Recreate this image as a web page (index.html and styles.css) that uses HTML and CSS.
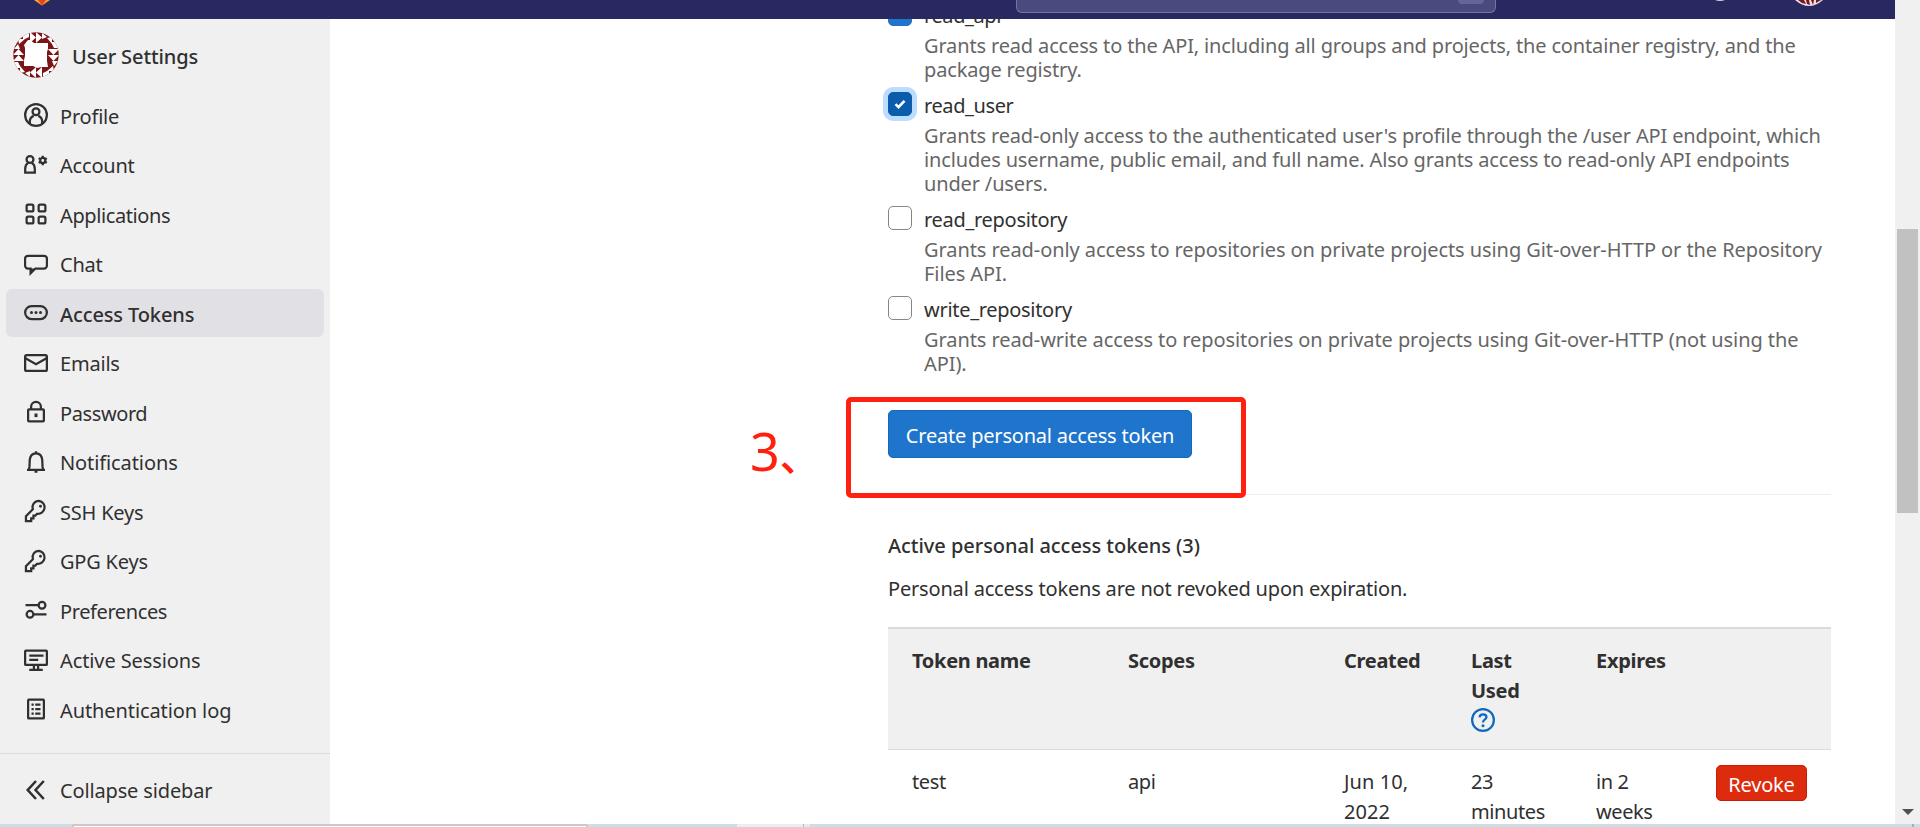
FILE: index.html
```html
<!DOCTYPE html>
<html lang="en">
<head>
<meta charset="utf-8">
<title>Access Tokens</title>
<link rel="stylesheet" href="styles.css">
</head>
<body>
<svg class="defs" width="0" height="0">
  <symbol id="key" viewBox="0 0 16 16"><path d="M10 1.2a4.3 4.3 0 0 0-4.1 5.6L1.3 11.4v3.3h3.5v-1.8h1.5v-1.8h1.3l1-1.2A4.4 4.4 0 1 0 10 1.2z"/><circle cx="11" cy="4.8" r=".95" fill="currentColor" stroke="none"/></symbol>
</svg>
<div class="app">
  <header class="topbar">
    <svg class="logo" width="16" height="6" viewBox="0 0 16 6"><path d="M0 0h16L8 5.5z" fill="#fca326"/><path d="M4 0h8L8 5.5z" fill="#e24329"/></svg>
    <div class="search"><span class="kbd"></span></div>
    <svg class="bar-help" width="14" height="3" viewBox="0 0 14 3"><path d="M2 0Q7 2 12 0z" fill="#d5d5e6"/></svg>
    <svg class="bar-user" width="30" height="7" viewBox="0 0 30 7"><path d="M1 0q14 12 28 0z" fill="#e6dfe6"/><path d="M4 0h6l2 4-4-1zM12 0h3l1 5-3-1zM17 0h3l-1 5zM22 0h5l-5 3z" fill="#7b1518"/></svg>
  </header>
  <div class="body">
    <aside class="sidebar">
      <div class="context">
        <svg class="avatar" width="46" height="46" viewBox="0 0 46 46"><defs><clipPath id="round"><circle cx="23" cy="23" r="22.7"/></clipPath>
          <path id="teeth" fill="#fff" d="M17 0l6 5.500-6 5.500zM23 0l6 5.500-6 5.500zM16 0v5L10 8V2zM5 7h7L6 12zM29 1l5 4-5 2z"/></defs>
          <g clip-path="url(#round)"><rect width="46" height="46" fill="#7b1518"/>
          <use href="#teeth"/><use href="#teeth" transform="rotate(90 23 23)"/><use href="#teeth" transform="rotate(180 23 23)"/><use href="#teeth" transform="rotate(270 23 23)"/>
          <path d="M17 8l4 3h14v6l-1 3v9l1 6h-6l-5 1-4-2h-9v-6l1-4v-8l-1-3 4-5z" fill="#fff"/></g></svg>
        <span>User Settings</span>
      </div>
      <nav class="nav">
        <a class="item"><svg class="ico" viewBox="0 0 16 16"><circle cx="8" cy="8" r="7.25"/><circle cx="8" cy="5.8" r="2.3"/><path d="M3.9 13.6v-1.4A3.9 3.9 0 0 1 6.5 8.6M12.1 13.6v-1.4a3.9 3.9 0 0 0-2.6-3.6"/></svg><span>Profile</span></a>
        <a class="item"><svg class="ico" viewBox="0 0 16 16"><circle cx="4" cy="4.3" r="2.3"/><path d="M2.7 6.6C1.4 7.3.8 8.7.8 10.6V13h6.4v-2.4c0-1.9-.6-3.3-1.9-4"/><circle cx="12.5" cy="5" r="1.7"/><path d="M12.5 1.9v1.2M12.5 6.9v1.2M9.8 3.4l1.1.7M14.1 5.9l1.1.7M9.8 6.6l1.1-.7M14.1 4.1l1.1-.7"/></svg><span>Account</span></a>
        <a class="item tight"><svg class="ico" viewBox="0 0 16 16"><rect x="1.75" y="1.75" width="4.5" height="4.5" rx="1"/><rect x="9.75" y="1.75" width="4.5" height="4.5" rx="1"/><rect x="1.75" y="9.75" width="4.5" height="4.5" rx="1"/><rect x="9.75" y="9.75" width="4.5" height="4.5" rx="1"/></svg><span>Applications</span></a>
        <a class="item"><svg class="ico" viewBox="0 0 16 16"><path d="M2.7 2.5h10.600a2 2 0 0 1 2 2V9a2 2 0 0 1-2 2H7.600l-3.200 3.200V11H2.700a2 2 0 0 1-2-2V4.500a2 2 0 0 1 2-2z"/><path d="M4.200 11h3l-3 3z" fill="currentColor" stroke="none"/></svg><span>Chat</span></a>
        <a class="item active"><svg class="ico" viewBox="0 0 16 16"><rect x=".75" y="3.4" width="14.5" height="8.6" rx="4.3"/><g fill="currentColor" stroke="none"><circle cx="5" cy="7.700" r="1"/><circle cx="8" cy="7.700" r="1"/><circle cx="11" cy="7.700" r="1"/></g></svg><span>Access Tokens</span></a>
        <a class="item"><svg class="ico" viewBox="0 0 16 16"><rect x=".75" y="2.75" width="14.5" height="10.5" rx="1"/><path d="M1 4.8l7 4 7-4"/></svg><span>Emails</span></a>
        <a class="item tight"><svg class="ico" viewBox="0 0 16 16"><rect x="2.75" y="6.25" width="10.5" height="8" rx=".6"/><path d="M4.75 6V4.5a3.25 3.25 0 0 1 6.5 0V6"/><path d="M8 9v2.4" stroke-width="2"/></svg><span>Password</span></a>
        <a class="item loose"><svg class="ico" viewBox="0 0 16 16"><path d="M2 13.2h12M3.3 13c.6-1.6.4-3.6.5-6C4 4 5.6 2.2 8 2.2S12 4 12.2 7c.1 2.400-.1 4.400.5 6M8 .9v1.200M7 14.400h2"/></svg><span>Notifications</span></a>
        <a class="item"><svg class="ico"><use href="#key"/></svg><span>SSH Keys</span></a>
        <a class="item"><svg class="ico"><use href="#key"/></svg><span>GPG Keys</span></a>
        <a class="item tight"><svg class="ico" viewBox="0 0 16 16"><circle cx="12" cy="4.800" r="2.250"/><circle cx="4" cy="10.900" r="2.250"/><path d="M1 4.800h8.700M6.300 10.900H15"/></svg><span>Preferences</span></a>
        <a class="item loose"><svg class="ico" viewBox="0 0 16 16"><rect x=".75" y="1.750" width="14.500" height="9.500" rx=".5"/><path d="M3.500 5H13M3.500 7.900h6M6.600 11.500v2.300M9.400 11.500v2.300M3.500 14.500h9" /></svg><span>Active Sessions</span></a>
        <a class="item loose"><svg class="ico" viewBox="0 0 16 16"><rect x="2.750" y="1.750" width="10.500" height="12.500" rx=".5"/><path d="M5 5h1.500M7.500 5h3.500M5 8h1.500M7.500 8h3.500M5 11h1.500M7.500 11h3.500"/></svg><span>Authentication log</span></a>
      </nav>
      <a class="item collapse"><svg class="ico" viewBox="0 0 16 16"><path d="M8 2L2.500 8 8 14M13.200 2L7.700 8l5.500 6" stroke-width="1.700"/></svg><span>Collapse sidebar</span></a>
    </aside>
    <main class="main">
      <section class="scopes">
        <div class="scope first"><i class="box on"></i><div><div class="name">read_api</div><p>Grants read access to the API, including all groups and projects, the container registry, and the<br>package registry.</p></div></div>
        <div class="scope"><i class="box on focus"><svg width="12" height="12" viewBox="0 0 12 12"><path d="M1.500 6.200l3 3 6-6.400" fill="none" stroke="#fff" stroke-width="2.600"/></svg></i><div><div class="name">read_user</div><p>Grants read-only access to the authenticated user's profile through the /user API endpoint, which<br>includes username, public email, and full name. Also grants access to read-only API endpoints<br>under /users.</p></div></div>
        <div class="scope wide"><i class="box"></i><div><div class="name">read_repository</div><p>Grants read-only access to repositories on private projects using Git-over-HTTP or the Repository<br>Files API.</p></div></div>
        <div class="scope wide"><i class="box"></i><div><div class="name">write_repository</div><p>Grants read-write access to repositories on private projects using Git-over-HTTP (not using the<br>API).</p></div></div>
      </section>
      <button class="create"><span>Create personal access token</span></button>
      <hr>
      <h5>Active personal access tokens (3)</h5>
      <p class="note">Personal access tokens are not revoked upon expiration.</p>
      <div class="table">
        <div class="row head"><div>Token name</div><div>Scopes</div><div>Created</div><div>Last<br>Used<br><svg class="q" width="24" height="24" viewBox="0 0 16 16"><circle cx="8" cy="8" r="7.250"/><path d="M5.700 6.200C5.800 4.900 6.700 4.200 8 4.200s2.300.8 2.300 1.900C10.300 7.600 8 7.600 8 9.600"/><circle cx="8" cy="11.900" r="1" fill="currentColor" stroke="none"/></svg></div><div>Expires</div><div></div></div>
        <div class="row"><div>test</div><div>api</div><div class="date">Jun 10,<br>2022</div><div>23<br>minutes</div><div>in 2<br>weeks</div><div><button class="revoke">Revoke</button></div></div>
      </div>
    </main>
  </div>
  <div class="scrollbar"><div class="thumb"></div><div class="arrow"></div></div>
  <div class="mark-box"></div>
  <div class="mark-label">3<span>、</span></div>
  <div class="under"><span class="window"></span><span class="pale"></span><span class="pale2"></span><span class="tick"></span></div>
</div>
</body>
</html>
```
FILE: styles.css
```css
* { box-sizing: border-box; }
body { margin: 0; overflow: hidden; background: #fff; color: #303030; font: 20px/30px "Noto Sans", "Open Sans", sans-serif; letter-spacing: -0.4px; }
p, h5 { margin: 0; }
button { font: inherit; letter-spacing: -0.2px; color: #fff; padding: 0; display: block; }
.defs { position: absolute; }
.app { position: relative; width: 1920px; height: 827px; overflow: hidden; display: flex; flex-direction: column; }
.topbar { height: 19px; width: 1895px; background: #292961; display: flex; align-items: flex-start; flex: none; position: relative; z-index: 2; padding-left: 34px; }
.search { margin-left: 966px; width: 480px; height: 13px; background: #4a4a7d; border: 1px solid #7474a0; border-top: 0; border-radius: 0 0 6px 6px; display: flex; justify-content: flex-end; padding-right: 11px; }
.kbd { width: 26px; height: 4px; background: #65659a; border-radius: 0 0 4px 4px; }
.bar-help { margin-left: 217px; }
.bar-user { margin-left: 67px; }
.body { display: flex; height: 805px; width: 1895px; flex: none; }
.sidebar { width: 330px; background: #f0f0f0; height: 805px; flex: none; }
.context { height: 72px; padding: 13px 0 0 13px; display: flex; gap: 13px; font-weight: 500; }
.context span { padding-top: 10px; height: 36px; line-height: 30px; letter-spacing: -0.1px; }
.avatar { flex: none; }
.nav { display: flex; flex-direction: column; gap: 1.5px; padding: 0 6px; }
.item { height: 48px; display: flex; align-items: center; padding-left: 18px; border-radius: 6px; gap: 12px; letter-spacing: -0.2px; }
.item span { padding-top: 3px; }
.tight { letter-spacing: -0.4px; }
.loose { letter-spacing: -0.1px; }
.active { background: #e1e0e5; font-weight: 500; letter-spacing: -0.12px; }
.ico { width: 24px; height: 24px; fill: none; stroke: #303030; color: #303030; stroke-width: 1.5; flex: none; }
.collapse { margin-top: 20px; border-top: 1px solid #dbdbdb; border-radius: 0; height: 73px; padding-left: 24px; letter-spacing: -0.15px; }
.collapse span { padding-top: 1px; }
.main { margin-left: 558px; width: 943px; }
.scopes { margin-top: -18px; display: flex; flex-direction: column; gap: 9px; }
.scope { display: flex; gap: 12px; }
.box { width: 24px; height: 24px; margin-top: 1px; border: 1px solid #868686; border-radius: 5px; flex: none; display: flex; align-items: center; justify-content: center; }
.on { background: #1f75cb; border-color: #1f75cb; }
.focus { background: #0b5cad; border-color: #0b5cad; box-shadow: 0 0 0 5px #bddcff; }
.name { height: 33px; white-space: nowrap; }
.wide .name { letter-spacing: -0.3px; }
.scope p { line-height: 24px; color: #666; white-space: nowrap; letter-spacing: -0.15px; }
.wide p { letter-spacing: -0.08px; }
.create { margin-top: 34px; width: 304px; height: 48px; background: #1f75cb; border: 1px solid #1068bf; border-radius: 5px; padding-top: 3px; }
hr { margin: 36px 0 0; border: 0; height: 1px; background: #eee; }
h5 { font-size: 20px; font-weight: 500; margin-top: 36px; letter-spacing: -0.04px; }
.note { margin-top: 13px; letter-spacing: -0.18px; }
.table { margin-top: 23px; border-top: 2px solid #dbdbdb; }
.row { display: grid; grid-template-columns: 216px 216px 127px 125px 120px 1fr; padding: 17px 0 0 24px; }
.head { height: 121px; background: #f0f0f0; border-bottom: 1px solid #dbdbdb; font-weight: 700; letter-spacing: -0.3px; }
.date { letter-spacing: 0.1px; }
.q { display: block; margin-top: 2px; fill: none; stroke: #1068bf; color: #1068bf; stroke-width: 1.5; }
.revoke { width: 91px; height: 36px; margin-top: -2px; padding-top: 3px; background: #dd2b0e; border: 1px solid #c91c00; border-radius: 5px; }
.scrollbar { position: absolute; right: 0; top: 0; width: 25px; height: 824px; background: #f0f0f0; }
.thumb { margin: 229px 2px 0; height: 284px; background: #c1c1c1; }
.arrow { margin: 296px 0 0 7px; width: 0; border: 6px solid transparent; border-top-color: #505050; border-bottom: 0; }
.mark-box { position: absolute; left: 846px; top: 397px; width: 400px; height: 101px; border: 5px solid #ff2010; border-radius: 5px; }
.mark-label { position: absolute; left: 750px; top: 421px; font: 400 52px/60px "Noto Sans", sans-serif; color: #ff2010; display: flex; letter-spacing: 0; }
.mark-label span { font: 500 40px/66px "Noto Sans CJK SC", sans-serif; }
.under { position: absolute; left: 0; top: 824px; width: 1920px; height: 3px; background: #cbe0e6; z-index: 3; }
.under span { position: absolute; top: 0; height: 3px; }
.window { left: 72px; width: 516px; background: #fff; border: 2px solid #cacaca; border-bottom: 0; }
.pale { left: 737px; width: 66px; background: #e6f0f3; }
.pale2 { left: 803px; width: 7px; background: #e0ecf0; border-left: 1px solid #a9bcc2; }
.tick { left: 1912px; width: 2px; background: #9fb4ba; }
```
